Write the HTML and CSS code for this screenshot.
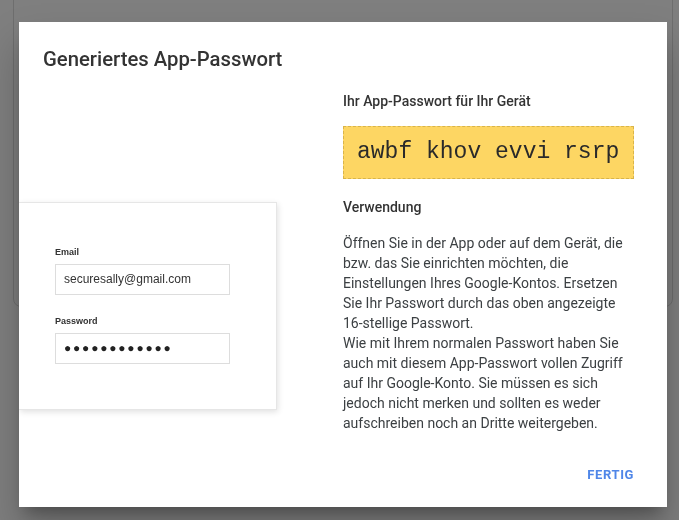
FILE: index.html
```
<!DOCTYPE html>
<html lang="de">
<head>
    <meta charset="UTF-8">
    <meta name="viewport" content="width=device-width, initial-scale=1.0">
    <title>Generiertes App-Passwort</title>
    <link rel="stylesheet" href="styles.css">
</head>
<body>
    <div class="backdrop-card"></div>
    <div class="overlay"></div>

    <div class="dialog">
        <div class="left">
            <h1 class="title">Generiertes App-Passwort</h1>

            <div class="sample">
                <label class="sample-label">Email</label>
                <div class="sample-input">securesally@gmail.com</div>
                <label class="sample-label">Password</label>
                <div class="sample-input dots">&#9679;&#9679;&#9679;&#9679;&#9679;&#9679;&#9679;&#9679;&#9679;&#9679;&#9679;&#9679;</div>
            </div>
        </div>

        <div class="right">
            <h2 class="heading">Ihr App-Passwort für Ihr Gerät</h2>
            <div class="password">awbf khov evvi rsrp</div>

            <h2 class="heading usage">Verwendung</h2>
            <p class="text">
                Öffnen Sie in der App oder auf dem Gerät, die bzw. das Sie einrichten möchten, die Einstellungen Ihres Google-Kontos. Ersetzen Sie Ihr Passwort durch das oben angezeigte 16-stellige Passwort.<br>
                Wie mit Ihrem normalen Passwort haben Sie auch mit diesem App-Passwort vollen Zugriff auf Ihr Google-Konto. Sie müssen es sich jedoch nicht merken und sollten es weder aufschreiben noch an Dritte weitergeben.
            </p>

            <div class="actions">
                <button class="done">FERTIG</button>
            </div>
        </div>
    </div>
</body>
</html>
```

FILE: styles.css
```
body {
    margin: 0;
    height: 100vh;
    background-color: #fff;
    font-family: Roboto, "Noto Sans", Arial, sans-serif;
    overflow: hidden;
}

.backdrop-card {
    position: absolute;
    left: 13px;
    right: 6px;
    top: -10px;
    height: 315px;
    border: 1px solid #ddd;
    border-radius: 8px;
    background-color: #fff;
}

.overlay {
    position: fixed;
    inset: 0;
    background-color: rgba(0, 0, 0, 0.5);
}

.dialog {
    position: absolute;
    left: 19px;
    top: 22px;
    width: 648px;
    height: 485px;
    background-color: #fff;
    box-shadow: 0 11px 15px -7px rgba(0, 0, 0, 0.3), 0 24px 38px 3px rgba(0, 0, 0, 0.2);
    display: grid;
    grid-template-columns: 324px 291px;
    overflow: hidden;
}

.left {
    display: flex;
    flex-direction: column;
}

.title {
    margin: 24px 0 0 24px;
    font-size: 20.3px;
    font-weight: 500;
    color: #333;
    line-height: 26px;
}

.sample {
    margin-top: 130px;
    width: 258px;
    height: 208px;
    box-sizing: border-box;
    border: 1px solid #e6e6e6;
    border-left: none;
    box-shadow: 1px 2px 6px rgba(0, 0, 0, 0.12);
    padding: 44px 0 0 36px;
    font-family: "Liberation Sans", Arial, sans-serif;
}

.sample-label {
    display: block;
    font-size: 9px;
    font-weight: bold;
    color: #333;
    margin-bottom: 7px;
}

.sample-input {
    width: 175px;
    height: 31px;
    box-sizing: border-box;
    border: 1px solid #ddd;
    padding: 0 8px;
    font-size: 12px;
    line-height: 29px;
    color: #333;
    margin-bottom: 21px;
}

.dots {
    font-size: 12px;
    letter-spacing: 1.8px;
    color: #222;
}

.right {
    padding-top: 70px;
    display: flex;
    flex-direction: column;
}

.heading {
    margin: 0;
    font-size: 14px;
    font-weight: 500;
    color: #333;
    line-height: 18px;
}

.password {
    margin-top: 16px;
    height: 53px;
    box-sizing: border-box;
    border: 1px dashed #d9b44a;
    background-color: #fdd663;
    font-family: "Liberation Mono", "Courier New", monospace;
    font-size: 23px;
    line-height: 51px;
    padding-left: 13px;
    color: #2a2a2a;
}

.usage {
    margin-top: 19px;
}

.text {
    margin: 17px 0 0;
    font-size: 14px;
    line-height: 20px;
    color: #3c4043;
}

.actions {
    margin-top: 34px;
    display: flex;
    justify-content: flex-end;
}

.done {
    background: none;
    border: none;
    padding: 0;
    font-family: Roboto, Arial, sans-serif;
    font-size: 13px;
    font-weight: 700;
    color: #4f86e8;
    letter-spacing: 0.6px;
    cursor: pointer;
}
```
